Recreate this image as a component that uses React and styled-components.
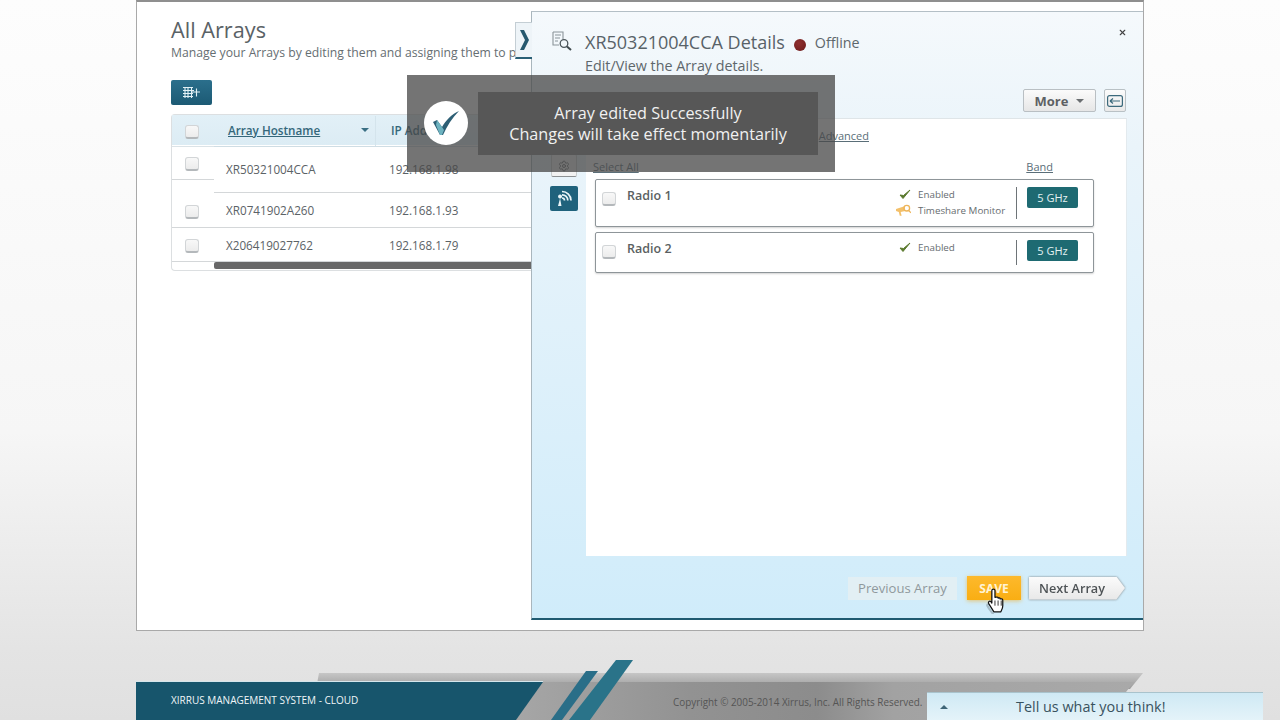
import React from "react";
import styled, { createGlobalStyle } from "styled-components";
import { Settings, X } from "lucide-react";

const GlobalStyle = createGlobalStyle`
  html, body { margin: 0; padding: 0; height: 720px; overflow: hidden; }
  body { font-family: "Open Sans", "Liberation Sans", sans-serif; color: #5b6468; }
`;

const Page = styled.div`
  width: 1280px;
  height: 720px;
  position: relative;
  overflow: hidden;
  background: linear-gradient(180deg, #fdfdfd 0%, #f6f6f6 60%, #e4e4e4 90%, #e0e0e0 100%);
`;

const Content = styled.main`
  box-sizing: border-box;
  position: relative;
  width: 1008px;
  height: 631px;
  margin-left: 136px;
  padding: 16px 34px 0;
  background: #fff;
  border: 1px solid #a9a9a9;
  border-top: 2px solid #8f8f8f;
  overflow: hidden;
`;

const Heading = styled.h1`
  margin: 0;
  font-size: 21.7px;
  line-height: 24px;
  font-weight: 400;
  color: #5a6266;
`;

const Lead = styled.p`
  margin: 2px 0 0;
  font-size: 12.2px;
  line-height: 18px;
  white-space: nowrap;
  color: #666e72;
`;

const AddButton = styled.button`
  display: flex;
  align-items: center;
  justify-content: center;
  width: 41px;
  height: 25px;
  margin-top: 18px;
  padding: 0;
  border: 0;
  border-radius: 2px;
  background: linear-gradient(180deg, #2b6f8c, #1c5a74);
`;

const Table = styled.div`
  width: 520px;
  margin-top: 9px;
  border: 1px solid #dcdfe1;
  border-radius: 4px 0 0 4px;
  border-right: 0;
  padding-bottom: 1px;
`;

const Row = styled.div`
  display: grid;
  grid-template-columns: 42px 1fr;
  height: ${(p) => p.$h}px;
  font-size: 11.7px;
  color: #5b6266;
  background: ${(p) => (p.$head ? "linear-gradient(180deg,#e2f0f7,#dcecf4)" : "#fff")};
`;

const CheckCell = styled.div`
  box-sizing: border-box;
  display: flex;
  justify-content: center;
  align-items: flex-start;
  height: ${(p) => p.$h}px;
  padding: ${(p) => p.$pt}px ${(p) => p.$pr}px 0 0;
  border-bottom: 1px solid ${(p) => p.$line || "#d4d7d9"};
`;

const Cells = styled.div`
  box-sizing: border-box;
  display: grid;
  grid-template-columns: 162px 1fr;
  align-items: center;
  border-bottom: 1px solid ${(p) => p.$line || "#d4d7d9"};
`;

const Box = styled.span`
  display: block;
  box-sizing: border-box;
  width: 14px;
  height: 14px;
  border: 1px solid #d2d5d7;
  border-bottom: 2px solid #b4b8bb;
  border-radius: 3px;
  background: linear-gradient(180deg, #f8f8f8, #ececec);
`;

const SortHead = styled.a`
  box-sizing: border-box;
  display: flex;
  justify-content: space-between;
  align-items: center;
  height: 30px;
  padding: 0 6px 2px 14px;
  border-right: 1px solid #d4e4ec;
  font-weight: 600;
  color: #34677a;
  span { text-decoration: underline; }
`;

const Caret = styled.i`
  display: block;
  width: 0;
  height: 0;
  border-left: 4px solid transparent;
  border-right: 4px solid transparent;
  border-top: 4px solid ${(p) => p.$color || "#3a6f84"};
`;

const HeadCell = styled.div`
  padding: 0 0 2px 15px;
  font-weight: 600;
  color: #34677a;
`;

const Host = styled.div`
  padding-left: 12px;
`;

const Ip = styled.div`
  padding-left: 13px;
`;

const Scrollbar = styled.div`
  height: 7px;
  margin-left: 42px;
  background: #686868;
  border-radius: 2px 0 0 2px;
`;

const Drawer = styled.aside`
  box-sizing: border-box;
  position: absolute;
  left: 394px;
  top: 9px;
  width: 612px;
  height: 609px;
  display: flex;
  flex-direction: column;
  background: linear-gradient(180deg, #f5f9fc 0%, #eaf4fa 22%, #d0ecfa 100%);
  border-top: 1px solid #b4bfc6;
  border-left: 1px solid #a9b6bd;
  border-bottom: 2px solid #1f5a70;
`;

const Tab = styled.div`
  position: absolute;
  left: -17px;
  top: 10px;
  width: 16px;
  height: 34px;
  display: flex;
  align-items: center;
  justify-content: center;
  background: #eef4f8;
  border: 1px solid #c4ced4;
  border-right: 0;
  border-bottom: 2px solid #2a5f75;
`;

const Close = styled.span`
  position: absolute;
  right: 16px;
  top: 16px;
  display: flex;
  color: #444;
`;

const DrawerHead = styled.header`
  display: flex;
  gap: 12px;
  height: 77px;
  padding: 19px 0 0 20px;
  box-sizing: border-box;
`;

const HeadText = styled.div`
  display: flex;
  flex-direction: column;
`;

const TitleRow = styled.div`
  display: flex;
  align-items: center;
  height: 22px;
`;

const Title = styled.h2`
  margin: 0;
  font-size: 18px;
  font-weight: 400;
  color: #586268;
  white-space: nowrap;
`;

const Dot = styled.span`
  width: 12px;
  height: 12px;
  margin: 6px 9px 0 9px;
  border-radius: 50%;
  background: radial-gradient(circle at 40% 35%, #8f2f2f, #6c1a1a);
`;

const Status = styled.span`
  font-size: 14.3px;
  color: #5e676c;
`;

const Sub = styled.p`
  margin: 3px 0 0;
  font-size: 14.3px;
  line-height: 19px;
  color: #5e676c;
  white-space: nowrap;
`;

const Tools = styled.div`
  display: flex;
  justify-content: flex-end;
  gap: 8px;
  height: 29px;
  padding-right: 17px;
`;

const MoreButton = styled.button`
  box-sizing: border-box;
  display: flex;
  align-items: center;
  justify-content: center;
  gap: 8px;
  width: 73px;
  height: 23px;
  padding: 0;
  border: 1px solid #b9bfc3;
  border-radius: 2px;
  background: linear-gradient(180deg, #fbfbfb, #e6e6e6);
  font: 700 13px "Open Sans", sans-serif;
  color: #5d6164;
`;

const IconButton = styled.button`
  box-sizing: border-box;
  display: flex;
  align-items: center;
  justify-content: center;
  width: 22px;
  height: 23px;
  padding: 0;
  border: 1px solid #b9c1c5;
  border-radius: 2px;
  background: linear-gradient(180deg, #fbfbfb, #e9e9e9);
`;

const Body = styled.div`
  display: flex;
  height: 438px;
  padding-right: 16px;
`;

const Rail = styled.nav`
  width: 54px;
  box-sizing: border-box;
  padding: 36px 0 0 18px;
  display: flex;
  flex-direction: column;
  gap: 9px;
`;

const RailItem = styled.div`
  box-sizing: border-box;
  display: flex;
  align-items: center;
  justify-content: center;
  width: ${(p) => (p.$active ? 28 : 26)}px;
  height: ${(p) => (p.$active ? 25 : 23)}px;
  margin-left: ${(p) => (p.$active ? 0 : 1)}px;
  border-radius: 2px;
  background: ${(p) => (p.$active ? "#1f627c" : "#f2f2f2")};
  border: ${(p) => (p.$active ? "0" : "1px solid #c8cccd")};
  border-bottom: ${(p) => (p.$active ? "0" : "1px solid #8d9193")};
  color: #6a6e70;
`;

const Card = styled.section`
  flex: 1;
  box-sizing: border-box;
  padding: 9px 9px 0;
  background: #fff;
  border-top: 1px solid #dfe5e8;
  border-right: 1px solid #e3eaee;
`;

const LinkRow = styled.div`
  display: flex;
  justify-content: flex-end;
  height: 15px;
  padding-right: 248px;
  font-size: 11px;
  line-height: 15px;
`;

const TextLink = styled.a`
  font-size: 11px;
  text-decoration: underline;
  color: #5a6e78;
`;

const ListHead = styled.div`
  display: flex;
  justify-content: space-between;
  margin: 16px 0 0 -2px;
  width: 460px;
  height: 20px;
  padding-right: 40px;
  line-height: 15px;
`;

const RadioCard = styled.div`
  box-sizing: border-box;
  display: flex;
  width: 499px;
  height: ${(p) => p.$h}px;
  margin-top: ${(p) => p.$mt}px;
  border: 1px solid #8e9599;
  border-radius: 2px;
  box-shadow: 0 1px 2px rgba(0, 0, 0, 0.18);
  background: #fff;
`;

const RadioName = styled.div`
  flex: 1;
  display: flex;
  gap: 11px;
  padding: 8px 0 0 6px;
  font-size: 12.5px;
  font-weight: 600;
  line-height: 16px;
  color: #5b5f62;
  ${Box} { margin-top: 4px; }
`;

const Flags = styled.ul`
  list-style: none;
  flex: none;
  width: 111px;
  margin: 7px 0 0;
  padding: 0;
  display: flex;
  flex-direction: column;
  gap: 1px;
`;

const Flag = styled.li`
  display: flex;
  align-items: center;
  height: 15px;
  font-size: 9.8px;
  color: #666c70;
  white-space: nowrap;
`;

const FlagIcon = styled.span`
  display: flex;
  justify-content: flex-end;
  width: 15px;
  margin-right: 7px;
`;

const BandCell = styled.div`
  box-sizing: border-box;
  width: 77px;
  height: ${(p) => p.$h - 16}px;
  margin: 7px 0 0 9px;
  padding: 0 0 0 10px;
  border-left: 1px solid #6e7478;
`;

const BandTag = styled.span`
  display: flex;
  align-items: center;
  justify-content: center;
  width: 51px;
  height: 21px;
  border-radius: 2px;
  background: #1e6a72;
  color: #e4f2f2;
  font-size: 11px;
`;

const Actions = styled.div`
  display: flex;
  justify-content: flex-end;
  align-items: center;
  gap: 8px;
  flex: 1;
  padding: 2px 18px 0 0;
`;

const PrevButton = styled.button`
  width: 109px;
  height: 23px;
  padding: 0;
  border: 0;
  background: #e2eff4;
  font: 400 13.1px "Open Sans", sans-serif;
  color: #8f989c;
  margin-right: 2px;
`;

const SaveButton = styled.button`
  position: relative;
  width: 54px;
  height: 24px;
  padding: 0;
  border: 0;
  background: linear-gradient(180deg, #fdb92c, #f9ae13);
  box-shadow: 0 1px 4px rgba(240, 170, 30, 0.6);
  font: 700 12px "Open Sans", sans-serif;
  color: #fff3d4;
`;

const NextWrap = styled.span`
  display: block;
  filter: drop-shadow(0 0 1px rgba(90, 90, 90, 0.75));
`;

const NextButton = styled.button`
  display: block;
  width: 96px;
  height: 23px;
  padding: 0 10px 0 0;
  border: 0;
  background: linear-gradient(180deg, #fbfbfb, #e8e8e8);
  clip-path: polygon(0 0, 91% 0, 100% 50%, 91% 100%, 0 100%);
  font: 600 12.7px "Open Sans", sans-serif;
  color: #4e5356;
`;

const Cursor = styled.svg`
  position: absolute;
  left: 19px;
  top: 12px;
`;

const Toast = styled.div`
  box-sizing: border-box;
  position: absolute;
  left: 270px;
  top: 73px;
  width: 428px;
  height: 97px;
  display: flex;
  align-items: center;
  padding: 0 17px 0 71px;
  background: rgba(72, 72, 72, 0.76);
`;

const ToastCheck = styled.div`
  position: absolute;
  left: 17px;
  top: 26px;
  width: 44px;
  height: 44px;
  border-radius: 50%;
  background: #fff;
  display: flex;
  align-items: center;
  justify-content: center;
`;

const ToastBody = styled.div`
  flex: 1;
  height: 63px;
  display: flex;
  flex-direction: column;
  justify-content: center;
  align-items: center;
  background: #575757;
  color: #f1f1f1;
  font-size: 16.2px;
  line-height: 21px;
`;

const Footer = styled.footer`
  position: relative;
  display: flex;
  width: 1144px;
  height: 89px;
`;

const FooterBand = styled.svg`
  position: absolute;
  left: 0;
  top: 0;
`;

const Brand = styled.div`
  position: relative;
  box-sizing: border-box;
  width: 408px;
  height: 38px;
  margin: 51px 0 0 136px;
  padding: 11px 0 0 35px;
  font-size: 10px;
  line-height: 15px;
  color: #f0f6f8;
`;

const Copyright = styled.div`
  position: absolute;
  left: 673px;
  top: 64px;
  font-size: 9.9px;
  line-height: 14px;
  color: #555;
  white-space: nowrap;
`;

const Feedback = styled.div`
  box-sizing: border-box;
  position: absolute;
  left: 927px;
  bottom: 0;
  width: 336px;
  height: 28px;
  display: flex;
  align-items: center;
  background: linear-gradient(180deg, #cfe9f4, #e4f3f9);
  border-top: 1px solid #a9c3cc;
  color: #39525e;
  font-size: 14.4px;
`;

const FeedbackArrow = styled.i`
  display: block;
  margin: 0 68px 0 13px;
  width: 0;
  height: 0;
  border-left: 4px solid transparent;
  border-right: 4px solid transparent;
  border-bottom: 4px solid #3f6577;
`;

const radios = [
  { name: "Radio 1", h: 48, mt: 0, flags: ["Enabled", "Timeshare Monitor"] },
  { name: "Radio 2", h: 41, mt: 5, flags: ["Enabled"] },
];

const arrays = [
  { host: "XR50321004CCA", ip: "192.168.1.98", h: 48, checkH: 35, pt: 12 },
  { host: "XR0741902A260", ip: "192.168.1.93", h: 35, checkH: 35, pt: 12 },
  { host: "X206419027762", ip: "192.168.1.79", h: 34, checkH: 34, pt: 11 },
];

function Tick() {
  return (
    <svg width="12" height="11" viewBox="0 0 12 11">
      <path d="M1 6l3 3.500L11 1 4.500 6.500z" fill="#5b7a2e" stroke="#5b7a2e" strokeWidth="1" />
    </svg>
  );
}

function Monitor() {
  return (
    <svg width="16" height="13" viewBox="0 0 16 13" fill="none">
      <path d="M0 5l9-3 1 5-5 1 1 4H4L3 8 0 7z" fill="#f3c06a" />
      <circle cx="11.500" cy="4" r="3" stroke="#eeb55a" strokeWidth="1.400" />
      <path d="M13.500 6.500L16 9" stroke="#eeb55a" strokeWidth="1.400" />
    </svg>
  );
}

export default function App() {
  return (
    <Page>
      <GlobalStyle />
      <Content>
        <Heading>All Arrays</Heading>
        <Lead>Manage your Arrays by editing them and assigning them to p.</Lead>
        <AddButton>
          <svg width="19" height="13" viewBox="0 0 19 13" fill="none" stroke="#e2f1f6" strokeWidth="1.100">
            <path d="M1 1.500h10M1 4.500h11M1 7.500h10M1 10.500h10M3 1v11M6 1v11M9.500 1v11M9 6h9M14.500 2.500v8" />
          </svg>
        </AddButton>
        <Table>
          <Row $h={30} $head>
            <CheckCell $h={32} $pt={10} $pr={3} $line="#dbe3e7"><Box /></CheckCell>
            <Cells $line="#cfdde4">
              <SortHead><span>Array Hostname</span><Caret /></SortHead>
              <HeadCell>IP Address</HeadCell>
            </Cells>
          </Row>
          {arrays.map((a) => (
            <Row key={a.host} $h={a.h}>
              <CheckCell $h={a.checkH} $pt={a.pt} $pr={2}><Box /></CheckCell>
              <Cells>
                <Host>{a.host}</Host>
                <Ip>{a.ip}</Ip>
              </Cells>
            </Row>
          ))}
          <Scrollbar />
        </Table>

        <Drawer>
          <Tab>
            <svg width="10" height="20" viewBox="0 0 10 20">
              <path d="M1 0h4l5 10-5 10H1l5-10z" fill="#26586e" />
            </svg>
          </Tab>
          <Close><X size={9} strokeWidth={3} /></Close>
          <DrawerHead>
            <svg width="21" height="20" viewBox="0 0 21 20" fill="none" stroke="#8a9499" strokeWidth="1.100">
              <path d="M1 1h10v7M1 1v13h6M3 4h6M3 7h5M3 10h3" />
              <circle cx="12" cy="12.500" r="3.800" stroke="#4c565b" strokeWidth="1.300" />
              <path d="M15 15.500l4 3.500" stroke="#3f494e" strokeWidth="2" />
            </svg>
            <HeadText>
              <TitleRow>
                <Title>XR50321004CCA Details</Title>
                <Dot />
                <Status>Offline</Status>
              </TitleRow>
              <Sub>Edit/View the Array details.</Sub>
            </HeadText>
          </DrawerHead>
          <Tools>
            <MoreButton>More <Caret $color="#6a6e71" /></MoreButton>
            <IconButton>
              <svg width="16" height="12" viewBox="0 0 16 12" fill="none" stroke="#3c6a7c" strokeWidth="1.200">
                <rect x="0.600" y="0.600" width="14.800" height="10.800" rx="2" />
                <path d="M3 6h10M3 6l3-2.500M3 6l3 2.500" />
              </svg>
            </IconButton>
          </Tools>
          <Body>
            <Rail>
              <RailItem><Settings size={12} /></RailItem>
              <RailItem $active>
                <svg width="16" height="17" viewBox="0 0 16 17" fill="none" stroke="#eaf5f8" strokeWidth="1.700">
                  <path d="M6 1.500a9 9 0 0 1 9 9M6 4.800a5.700 5.700 0 0 1 5.800 5.800M6 8a2.500 2.500 0 0 1 2.500 2.500" />
                  <path d="M4 8.500a2 2 0 1 1 .1 0L5.500 16H2z" fill="#eaf5f8" stroke="none" />
                </svg>
              </RailItem>
            </Rail>
            <Card>
              <LinkRow><TextLink>Advanced</TextLink></LinkRow>
              <ListHead>
                <TextLink>Select All</TextLink>
                <TextLink>Band</TextLink>
              </ListHead>
              {radios.map((r) => (
                <RadioCard key={r.name} $h={r.h} $mt={r.mt}>
                  <RadioName><Box />{r.name}</RadioName>
                  <Flags>
                    {r.flags.map((f) => (
                      <Flag key={f}>
                        <FlagIcon>{f === "Enabled" ? <Tick /> : <Monitor />}</FlagIcon>
                        {f}
                      </Flag>
                    ))}
                  </Flags>
                  <BandCell $h={r.h}><BandTag>5 GHz</BandTag></BandCell>
                </RadioCard>
              ))}
            </Card>
          </Body>
          <Actions>
            <PrevButton>Previous Array</PrevButton>
            <SaveButton>
              SAVE
              <Cursor width="20" height="26" viewBox="0 0 18 25">
                <path d="M6.500 25.500c-1-2-5-6-6-9 0-1.500 2-1.500 3-.5l1.500 1.500" fill="none" stroke="#00000033" strokeWidth="2" />
                <path d="M5 2.500c0-2 3-2 3 0V9l1.500-.3c1-.2 1.500.3 1.500 1 1-.5 2-.2 2 .8 1-.4 2.500 0 2.500 1.200V17c0 3-1 4-2 6H7l-5-8c-1-2 1-3 2-2l1 1.500z" fill="#fff" stroke="#111" strokeWidth="1.200" strokeLinejoin="round" />
                <path d="M8 12v5M11 12v5M14 12v5" stroke="#111" strokeWidth=".8" />
              </Cursor>
            </SaveButton>
            <NextWrap><NextButton>Next Array</NextButton></NextWrap>
          </Actions>
        </Drawer>

        <Toast>
          <ToastCheck>
            <svg width="30" height="26" viewBox="0 0 30 26">
              <path d="M2 12l4-2 5 7C15 10 21 4 28 1 21 8 16 16 12 25H9z" fill="#2d5f75" />
              <path d="M6 10l5 7 2 3-2 5H9L5 15z" fill="#6db3c0" />
            </svg>
          </ToastCheck>
          <ToastBody>
            <div>Array edited Successfully</div>
            <div>Changes will take effect momentarily</div>
          </ToastBody>
        </Toast>
      </Content>

      <Footer>
        <FooterBand width="1144" height="89" viewBox="0 0 1144 89">
          <defs>
            <linearGradient id="bandTop" x1="0" y1="0" x2="0" y2="1">
              <stop offset="0" stopColor="#c6c6c6" />
              <stop offset="1" stopColor="#9a9a9a" />
            </linearGradient>
            <linearGradient id="bandLow" x1="0" y1="0" x2="1" y2="0">
              <stop offset="0" stopColor="#a8a8a8" />
              <stop offset="0.3" stopColor="#929292" />
              <stop offset="0.5" stopColor="#8c8c8c" />
              <stop offset="0.62" stopColor="#a2a2a2" />
              <stop offset="1" stopColor="#a9a9a9" />
            </linearGradient>
          </defs>
          <path d="M319 42H1143L1130 58H316z" fill="url(#bandTop)" />
          <path d="M500 51H1134L1126 61V89H500z" fill="url(#bandLow)" />
          <path d="M543 51H136V89H516z" fill="#17556c" />
          <path d="M136 50.500H543" stroke="#d5e6ec" />
          <path d="M586 40h12L562 89H551z" fill="#2a6e88" />
          <path d="M616 29h17L590 89H569z" fill="#2a7389" />
        </FooterBand>
        <Brand>XIRRUS MANAGEMENT SYSTEM - CLOUD</Brand>
        <Copyright>Copyright © 2005-2014 Xirrus, Inc. All Rights Reserved.</Copyright>
        <Feedback>
          <FeedbackArrow />
          Tell us what you think!
        </Feedback>
      </Footer>
    </Page>
  );
}
